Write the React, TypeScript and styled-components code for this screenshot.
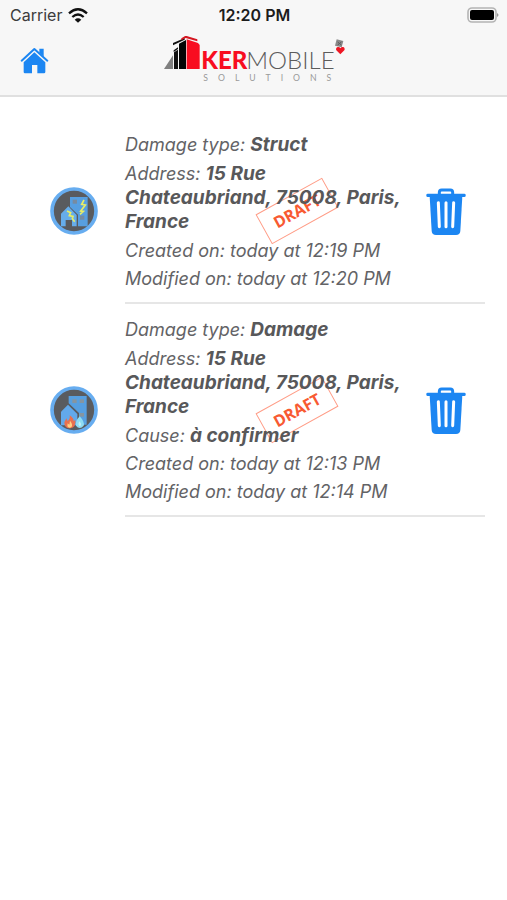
import React from "react";
import styled, { createGlobalStyle } from "styled-components";

const BLUE = "#1c86f2";

const GlobalStyle = createGlobalStyle`
  *, *::before, *::after { box-sizing: border-box; }
  body {
    margin: 0;
    background: #ffffff;
    color: #636366;
    font-family: Inter, "Liberation Sans", sans-serif;
  }
`;

const Header = styled.header`
  background: #f7f7f7;
  border-bottom: 2px solid #e0e0e0;
`;

const StatusBar = styled.div`
  display: grid;
  grid-template-columns: 1fr auto 1fr;
  align-items: center;
  height: 30px;
  padding: 0 8px 0 10px;
  font-size: 16px;
  line-height: 20px;
  color: #3c3c3c;
`;

const Carrier = styled.div`
  display: flex;
  align-items: center;
  gap: 6px;
`;

const Clock = styled.time`
  font-weight: 600;
  color: #1c1c1c;
`;

const Battery = styled.div`
  display: flex;
  justify-content: flex-end;
`;

const NavBar = styled.nav`
  display: grid;
  grid-template-columns: 1fr auto 1fr;
  align-items: center;
  height: 65px;
  padding: 0 20px;
`;

const HomeLink = styled.a`
  display: flex;
  justify-self: start;
  padding-bottom: 4px;
  color: ${BLUE};
`;

const LogoBlock = styled.div`
  display: flex;
  padding-bottom: 8px;
`;

const List = styled.ul`
  list-style: none;
  margin: 0;
  padding: 22px 22px 0 50px;
`;

const Item = styled.li`
  display: flex;
  align-items: center;
  gap: 27px;
`;

const Badge = styled.div`
  display: flex;
  flex: none;
  padding-bottom: 2px;
`;

const ItemBody = styled.div`
  flex: 1;
  position: relative;
  display: flex;
  align-items: center;
  justify-content: space-between;
  padding: 14px 19px 11px 0;
  border-bottom: 2px solid #e6e6e6;
`;

const Details = styled.div`
  position: relative;
  flex: 1;
  max-width: 284px;
  display: flex;
  flex-direction: column;
  gap: 4px;
  font-size: 18px;
  line-height: 24px;
  font-style: italic;
`;

const Line = styled.p<{ $block?: boolean }>`
  margin: 0;
  padding: ${(p) => (p.$block ? "1px 0" : "0")};

  strong {
    font-size: 19px;
    font-weight: 700;
    color: #58585a;
  }
`;

const Stamp = styled.span`
  position: absolute;
  left: 134px;
  top: 50%;
  display: flex;
  align-items: center;
  justify-content: center;
  width: 76px;
  height: 34px;
  margin-top: -17px;
  border: 1px solid #ff9c86;
  color: #f85a32;
  font: 700 16px/20px "Open Sans", sans-serif;
  transform: rotate(-29deg);
`;

const DeleteButton = styled.button`
  display: flex;
  flex: none;
  padding: 0;
  border: 0;
  background: none;
  color: ${BLUE};
  cursor: pointer;
`;

const WifiIcon = () => (
  <svg width="20" height="15" viewBox="0 0 60 45" aria-hidden="true">
    <g fill="none" stroke="#111" strokeWidth="7">
      <path d="M3 16 Q30 -8 57 16" />
      <path d="M13 27 Q30 12 47 27" />
    </g>
    <path d="M20 35 Q30 27 40 35 L30 44 Z" fill="#111" />
  </svg>
);

const BatteryIcon = () => (
  <svg width="33" height="17" viewBox="0 0 33 17" aria-label="Battery full" role="img">
    <rect x="2" y="1" width="28" height="14" rx="4" fill="none" stroke="#b4b4b4" strokeWidth="1.6" />
    <rect x="4" y="3" width="24" height="10" rx="2" fill="#000" />
    <path d="M31 6 Q34 8 31 10 Z" fill="#999" />
  </svg>
);

const HomeIcon = () => (
  <svg width="29" height="27" viewBox="0 0 87 81" aria-hidden="true">
    <path
      d="M5 41 L43 6 L82 41"
      fill="none"
      stroke="currentColor"
      strokeWidth="6"
      strokeLinecap="round"
      strokeLinejoin="round"
    />
    <path d="M58 5 H71 V29 L58 17 Z" fill="currentColor" />
    <path
      d="M43 16 L76 46 V75 Q76 79 72 79 H52 V54 H36 V79 H15 Q11 79 11 75 V46 Z"
      fill="currentColor"
    />
  </svg>
);

const TrashIcon = () => (
  <svg width="40" height="48" viewBox="0 0 120 144" aria-hidden="true">
    <path
      d="M40 20 V13 Q40 6 47 6 H73 Q80 6 80 13 V20"
      fill="none"
      stroke="currentColor"
      strokeWidth="9"
    />
    <rect x="1" y="17" width="118" height="10" rx="4" fill="currentColor" />
    <path d="M11 24 H109 L103 129 Q102 141 90 141 H30 Q18 141 17 129 Z" fill="currentColor" />
    <g stroke="#fff" strokeWidth="9" strokeLinecap="round">
      <path d="M37 44 L40 116" />
      <path d="M60 44 V116" />
      <path d="M83 44 L80 116" />
    </g>
  </svg>
);

const Logo = () => (
  <svg width="182" height="46" viewBox="39 33 546 138" role="img" aria-label="Kermobile Solutions">
    <path d="M42 132 L69 91 V132 Z" fill="#808080" />
    <path d="M71 76 L84 67 V72 L71 81 Z M72 82 L84 74 V132 H72 Z" fill="#111" />
    <path d="M87 56 L108 45 V132 H87 Z" fill="#050505" />
    <path d="M69 54 L104 39 V44 L69 61 Z" fill="#111" />
    <path d="M94 40 L107 32 L142 43 V49 L107 39 L94 46 Z" fill="#d51722" />
    <path d="M110 43 L144 54 L149 60 V132 H110 Z" fill="#f80d20" />
    <text x="154" y="131" fontFamily="Lato" fontWeight="900" fontSize="72" fill="#f80d20">
      KER
    </text>
    <text x="289" y="131" fontFamily="Lato" fontWeight="300" fontSize="72" fill="#5c5c5c">
      MOBILE
    </text>
    <text x="160" y="167" fontFamily="Lato" fontSize="26" letterSpacing="30" fill="#9a9a9a">
      SOLUTIONS
    </text>
    <path d="M560 43 L580 48 L575 67 L555 62 Z" fill="#8a8a8a" />
    <path d="M563 51 L574 60 M574 51 L563 60" stroke="#5d5d5d" strokeWidth="3" />
    <path
      d="M571 88 L559 76 Q556 68 563 66 Q569 65 571 70 Q574 65 580 66 Q586 69 583 76 Z"
      fill="#ee1724"
    />
  </svg>
);

const Building = ({ children }: { children: React.ReactNode }) => (
  <svg width="48" height="48" viewBox="0 0 144 144" aria-hidden="true">
    <circle cx="72" cy="72" r="66" fill="#595b5f" stroke="#67adf0" strokeWidth="11" />
    {children}
  </svg>
);

const StructIcon = () => (
  <Building>
    <path d="M60 30 H113 V118 H84 V83 L60 60 Z" fill="#579fe0" />
    <path d="M55 58 L80 84 V118 H66 V99 H47 V118 H33 V80 Z" fill="#66adeb" />
    <g fill="#778ba0">
      <rect x="68" y="38" width="13" height="12" />
      <rect x="90" y="86" width="13" height="12" />
    </g>
    <path
      d="M102 39 L95 52 L106 54 L92 72 L100 73 L90 82 M51 72 L62 77 L58 86 L69 88 L67 95 L74 104"
      fill="none"
      stroke="#e9ee65"
      strokeWidth="5"
    />
  </Building>
);

const DamageIcon = () => (
  <Building>
    <path d="M56 30 H110 V116 H87 V81 L56 52 Z" fill="#579fe0" />
    <path d="M54 56 L82 84 V118 H33 V77 Z" fill="#62a9eb" />
    <g fill="#8695a0">
      <rect x="67" y="40" width="13" height="11" />
      <rect x="89" y="40" width="13" height="11" />
      <rect x="89" y="81" width="13" height="11" />
    </g>
    <path
      d="M59 88 Q72 97 71 106 L76 101 Q79 123 61 127 Q43 128 43 109 L49 97 L53 105 Q61 99 59 88 Z"
      fill="#e9704e"
    />
    <path d="M60 104 Q69 115 65 122 Q58 129 52 121 L53 112 L58 116 Z" fill="#ffd083" />
    <path d="M89 91 Q105 108 101 119 Q89 133 78 119 Q74 107 89 91 Z" fill="#8ddcf4" />
    <path d="M88 106 Q97 115 90 121 Q82 117 88 106 Z" fill="#c4f0f8" />
  </Building>
);

interface Report {
  icon: React.ReactNode;
  type: string;
  address: string;
  cause?: string;
  created: string;
  modified: string;
}

const reports: Report[] = [
  {
    icon: <StructIcon />,
    type: "Struct",
    address: "15 Rue Chateaubriand, 75008, Paris, France",
    created: "today at 12:19 PM",
    modified: "today at 12:20 PM",
  },
  {
    icon: <DamageIcon />,
    type: "Damage",
    address: "15 Rue Chateaubriand, 75008, Paris, France",
    cause: "à confirmer",
    created: "today at 12:13 PM",
    modified: "today at 12:14 PM",
  },
];

const ReportItem = ({ report }: { report: Report }) => (
  <Item>
    <Badge>{report.icon}</Badge>
    <ItemBody>
      <Stamp>DRAFT</Stamp>
      <Details>
        <Line>
          Damage type: <strong>{report.type}</strong>
        </Line>
        <Line $block>
          Address: <strong>{report.address}</strong>
        </Line>
        {report.cause && (
          <Line>
            Cause: <strong>{report.cause}</strong>
          </Line>
        )}
        <Line>Created on: {report.created}</Line>
        <Line>Modified on: {report.modified}</Line>
      </Details>
      <DeleteButton type="button" aria-label={`Delete ${report.type} report`}>
        <TrashIcon />
      </DeleteButton>
    </ItemBody>
  </Item>
);

export default function App() {
  return (
    <>
      <GlobalStyle />
      <Header>
        <StatusBar>
          <Carrier>
            Carrier
            <WifiIcon />
          </Carrier>
          <Clock>12:20 PM</Clock>
          <Battery>
            <BatteryIcon />
          </Battery>
        </StatusBar>
        <NavBar>
          <HomeLink href="#home" aria-label="Home">
            <HomeIcon />
          </HomeLink>
          <LogoBlock>
            <Logo />
          </LogoBlock>
        </NavBar>
      </Header>
      <main>
        <List>
          {reports.map((report) => (
            <ReportItem key={report.type} report={report} />
          ))}
        </List>
      </main>
    </>
  );
}
